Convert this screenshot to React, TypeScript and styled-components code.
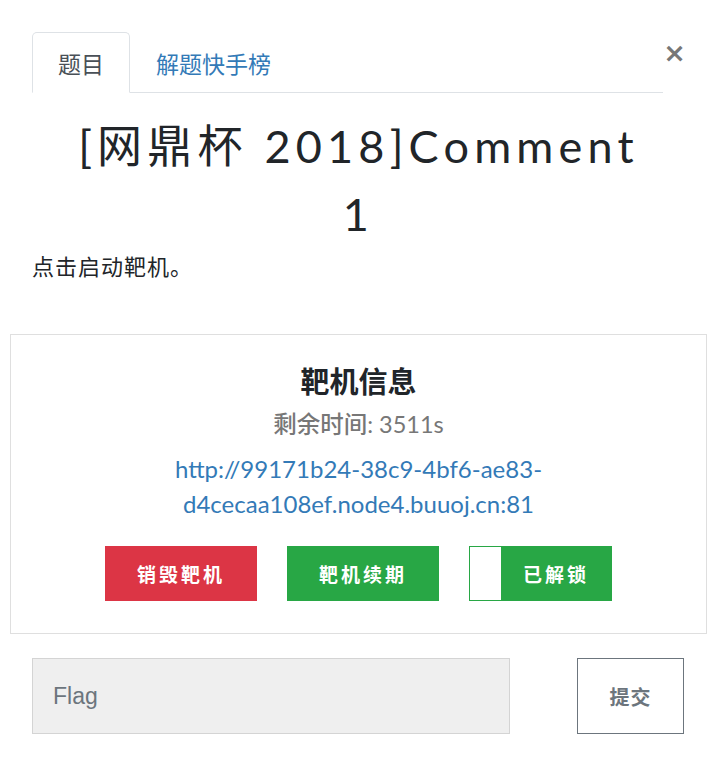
import React from "react";
import styled, { createGlobalStyle } from "styled-components";

const Global = createGlobalStyle`
  html, body { margin: 0; padding: 0; background: #fff; }
  body { font-family: Lato, "Noto Sans CJK SC", sans-serif; color: #212529; }
  * { box-sizing: border-box; }
`;

const Page = styled.div`
  width: 718px;
  padding: 32px 11px 40px 10px;
`;

const Header = styled.div`
  display: flex;
  align-items: flex-start;
  margin: 0 21px 0 22px;
`;

const TabList = styled.div`
  flex: 1;
  display: flex;
  border-bottom: 1px solid #dee2e6;
`;

const Tab = styled.div<{ $active?: boolean }>`
  height: 61px;
  display: flex;
  align-items: center;
  padding: 0 25px;
  margin-bottom: -1px;
  font-size: 23px;
  color: ${(p) => (p.$active ? "#495057" : "#337ab7")};
  border: 1px solid ${(p) => (p.$active ? "#dee2e6" : "transparent")};
  border-bottom-color: ${(p) => (p.$active ? "#fff" : "transparent")};
  border-radius: 5px 5px 0 0;
  background: ${(p) => (p.$active ? "#fff" : "transparent")};
`;

const Close = styled.button`
  border: none;
  background: none;
  padding: 0;
  width: 23px;
  margin-top: 7px;
  font-family: "DejaVu Sans", sans-serif;
  font-size: 27px;
  font-weight: 700;
  line-height: 1;
  color: #777;
  cursor: pointer;
`;

const Title = styled.h2`
  margin: 19px auto 0;
  max-width: 570px;
  text-align: center;
  font-family: Lato, "Noto Sans CJK SC", sans-serif;
  font-weight: 400;
  font-size: 45px;
  letter-spacing: 5.2px;
  line-height: 68px;
  color: #212529;
`;

const Desc = styled.p`
  margin: 5px 22px 0;
  font-size: 22px;
  letter-spacing: 1px;
  line-height: 27px;
`;

const InfoBox = styled.div`
  margin-top: 54px;
  border: 1px solid #dfdfdf;
  padding: 29px 16px 32px;
  text-align: center;
`;

const InfoTitle = styled.h4`
  margin: 0;
  font-size: 29px;
  font-weight: 700;
  line-height: 35px;
  color: #212529;
`;

const Remain = styled.div`
  margin-top: 10px;
  font-size: 23.5px;
  line-height: 30px;
  color: #777;
  b { font-weight: 500; }
`;

const Url = styled.a`
  display: block;
  margin: 12px auto 0;
  max-width: 520px;
  font-size: 24px;
  line-height: 35px;
  color: #337ab7;
  text-decoration: none;
`;

const Actions = styled.div`
  margin-top: 25px;
  display: flex;
  justify-content: center;
  gap: 30px;
`;

const ActionButton = styled.button<{ $color: string; $width: number }>`
  width: ${(p) => p.$width}px;
  height: 55px;
  border: 1px solid ${(p) => p.$color};
  background: ${(p) => p.$color};
  color: #fff;
  font-family: "Noto Sans CJK SC", sans-serif;
  font-size: 19px;
  font-weight: 700;
  letter-spacing: 3px;
  display: flex;
  align-items: stretch;
  padding: 0;
  border-radius: 0;
`;

const Label = styled.span`
  flex: 1;
  display: flex;
  align-items: center;
  justify-content: center;
`;

const Progress = styled.span`
  width: 31px;
  background: #fff;
`;

const FlagRow = styled.div`
  margin: 24px 23px 0 22px;
  display: flex;
  justify-content: space-between;
`;

const FlagInput = styled.input`
  width: 478px;
  height: 76px;
  background: #efefef;
  border: 1px solid #d4d4d4;
  padding: 0 20px;
  font-family: "Liberation Sans", Arial, sans-serif;
  font-size: 23px;
  color: #495057;
  outline: none;
  &::placeholder { color: #6c757d; }
`;

const Submit = styled.button`
  width: 107px;
  height: 76px;
  background: #fff;
  border: 1px solid #6c757d;
  color: #6c757d;
  font-family: "Noto Sans CJK SC", sans-serif;
  font-size: 20px;
  font-weight: 700;
  letter-spacing: 1px;
  border-radius: 0;
`;

export default function App() {
  return (
    <>
      <Global />
      <Page>
        <Header>
          <TabList>
            <Tab $active>题目</Tab>
            <Tab>解题快手榜</Tab>
          </TabList>
          <Close aria-label="Close">×</Close>
        </Header>
        <Title>[网鼎杯 2018]Comment 1</Title>
        <Desc>点击启动靶机。</Desc>
        <InfoBox>
          <InfoTitle>靶机信息</InfoTitle>
          <Remain>
            <b>剩余时间</b>: 3511s
          </Remain>
          <Url href="#">http://99171b24-38c9-4bf6-ae83-d4cecaa108ef.node4.buuoj.cn:81</Url>
          <Actions>
            <ActionButton $color="#dc3545" $width={152}>
              <Label>销毁靶机</Label>
            </ActionButton>
            <ActionButton $color="#28a745" $width={152}>
              <Label>靶机续期</Label>
            </ActionButton>
            <ActionButton $color="#28a745" $width={143}>
              <Progress />
              <Label>已解锁</Label>
            </ActionButton>
          </Actions>
        </InfoBox>
        <FlagRow>
          <FlagInput placeholder="Flag" />
          <Submit>提交</Submit>
        </FlagRow>
      </Page>
    </>
  );
}
